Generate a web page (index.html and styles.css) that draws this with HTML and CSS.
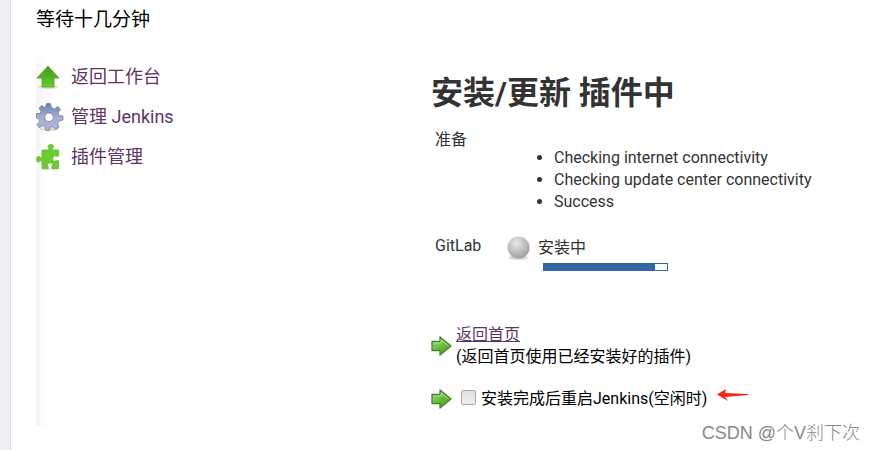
FILE: index.html
```html
<!DOCTYPE html>
<html lang="zh-CN">
<head>
    <meta charset="UTF-8">
    <meta name="viewport" content="width=device-width, initial-scale=1.0">
    <title>安装/更新 插件中</title>
    <link rel="stylesheet" href="styles.css">
</head>
<body>

    <div class="article">
        <p class="intro">等待十几分钟</p>

        <div class="jenkins">
            <!-- Side menu -->
            <nav class="side-panel">
                <a class="task" href="#">
                    <svg class="task-icon" viewBox="0 0 28 28">
                        <defs>
                            <linearGradient id="up" x1="0" y1="0" x2="0" y2="1">
                                <stop offset="0" stop-color="#4f9a2c"/>
                                <stop offset="0.5" stop-color="#4db025"/>
                                <stop offset="1" stop-color="#66d61c"/>
                            </linearGradient>
                        </defs>
                        <ellipse cx="12" cy="24" rx="10" ry="2" fill="#ddd"/>
                        <path d="M12 3 L23 15 H18 V24 H6 V15 H1 Z" fill="url(#up)" stroke="#57a036" stroke-width="0.8" stroke-linejoin="round"/>
                    </svg>
                    返回工作台
                </a>
                <a class="task" href="#">
                    <svg class="task-icon" viewBox="0 0 28 28">
                        <defs>
                            <linearGradient id="gear" x1="0" y1="0" x2="0" y2="1">
                                <stop offset="0" stop-color="#6580b0"/>
                                <stop offset="0.5" stop-color="#a3aed2"/>
                                <stop offset="1" stop-color="#b4b4d8"/>
                            </linearGradient>
                        </defs>
                        <ellipse cx="13" cy="26" rx="10" ry="2" fill="#ddd"/>
                        <path fill="url(#gear)" stroke="#7480a5" stroke-width="0.8" stroke-linejoin="round" fill-rule="evenodd" d="M10.500 0.500 H14.500 L15.500 4.500 L18.500 6 L22 3.500 L24.500 6.500 L22 10 L23 12.500 L27 13 V17 L23 18 L21.500 20.500 L23 24 L19.500 26.500 L16.500 23.500 L14.500 24 L13 27.500 H10 L9 23.500 L7 22.500 L3 24.500 L1 21.500 L3.500 18.500 L3 16 L0 14.500 V10.500 L4 10.500 L5 8.500 L3 5 L6 2.500 L9 5 Z M13 10 A4.300 4.300 0 1 0 13 18.600 A4.300 4.300 0 1 0 13 10 Z"/>
                    </svg>
                    管理 Jenkins
                </a>
                <a class="task" href="#">
                    <svg class="task-icon" viewBox="0 0 28 28">
                        <ellipse cx="14" cy="26" rx="10" ry="1" fill="#e2e2e2"/>
                        <path d="M6 7 H12.500 C14 5.500 11.500 4.500 12 3 C12.500 1 17 1 17.500 3 C18 4.500 15.500 5.500 17 7 H22.500 V13 C21 14.500 19.500 12 17.800 13 C16.300 14 16.300 17 17.800 18 C19.500 19 21 16.500 22.500 18 V25.500 H16 C14.800 24 17 23 16.500 21 C16 19.500 12 19.500 11.500 21 C11 23 13.200 24 12 25.500 H6 V18 C4.500 16.500 4 19.500 2 19 C0 18.500 0 14 2 13.500 C4 13 4.500 16 6 14.500 Z" fill="#6ccd2c" stroke="#64b834" stroke-width="0.8"/>
                    </svg>
                    插件管理
                </a>
            </nav>

            <!-- Install progress -->
            <main class="main-panel">
                <h1 class="title">安装/更新 插件中</h1>

                <table class="jobs">
                    <tr class="job-prepare">
                        <th scope="row">准备</th>
                        <td>
                            <ul class="checks">
                                <li>Checking internet connectivity</li>
                                <li>Checking update center connectivity</li>
                                <li>Success</li>
                            </ul>
                        </td>
                    </tr>
                    <tr>
                        <th scope="row">GitLab</th>
                        <td>
                            <div class="status">
                                <svg class="ball" viewBox="0 0 26 26">
                                    <defs>
                                        <radialGradient id="grey" cx="0.4" cy="0.3" r="0.7">
                                            <stop offset="0" stop-color="#e8e8e8"/>
                                            <stop offset="0.5" stop-color="#c4c4c4"/>
                                            <stop offset="1" stop-color="#a0a0a0"/>
                                        </radialGradient>
                                    </defs>
                                    <ellipse cx="13" cy="23" rx="10" ry="2.500" fill="#d8d8d8"/>
                                    <circle cx="13" cy="12.500" r="11.500" fill="url(#grey)"/>
                                </svg>
                                <span id="job-label">安装中</span>
                            </div>
                            <div class="bar" role="progressbar" aria-labelledby="job-label" aria-valuenow="90" aria-valuemin="0" aria-valuemax="100">
                                <div class="bar-done" style="width: 90%"></div>
                            </div>
                        </td>
                    </tr>
                </table>

                <svg class="defs" width="0" height="0">
                    <defs>
                        <linearGradient id="go" x1="0" y1="0" x2="1" y2="1">
                            <stop offset="0" stop-color="#a5d883"/>
                            <stop offset="0.6" stop-color="#5fb52f"/>
                            <stop offset="1" stop-color="#3f9a1c"/>
                        </linearGradient>
                        <symbol id="arrow" viewBox="0 0 21 20">
                            <path d="M1 5.500 H9 V1 L20 10 L9 19 V14.500 H1 Z" fill="url(#go)" stroke="#43852a" stroke-width="1.300" stroke-linejoin="round"/>
                            <path d="M2.500 7 H10.300 V4 L17.500 10" fill="none" stroke="#c3e6ac" stroke-width="0.800"/>
                        </symbol>
                    </defs>
                </svg>

                <div class="next-steps">
                    <div class="next">
                        <svg class="arrow"><use href="#arrow"/></svg>
                        <div>
                            <a class="home-link" href="#">返回首页</a><br>
                            (返回首页使用已经安装好的插件)
                        </div>
                    </div>
                    <div class="next">
                        <svg class="arrow"><use href="#arrow"/></svg>
                        <input class="restart-box" type="checkbox" id="restart">
                        <label for="restart">安装完成后重启Jenkins(空闲时)</label>
                        <svg class="pointer" viewBox="0 0 32 12">
                            <path d="M0 5.500 L9 0 L8 4 L31 5 V6 L8 8 L11 12 Z" fill="#fb2314"/>
                        </svg>
                    </div>
                </div>
            </main>
        </div>
    </div>

    <div class="watermark">CSDN @个V刹下次</div>

</body>
</html>
```
FILE: styles.css
```css
* { box-sizing: border-box; }

body {
    margin: 0;
    padding-left: 10px;
    background: #eeeef4;
    color: #333;
    font: 16px/22px Roboto, "Noto Sans CJK SC", sans-serif;
}

.article {
    min-height: 100vh;
    padding: 9px 0 24px 25px;
    background: white;
    border-left: 1px solid #dcdce2;
}

.intro {
    margin: 0 0 18px;
    color: #000;
    font-size: 19px;
}

.jenkins { display: flex; }

/* Side menu */
.side-panel {
    display: flex;
    flex-direction: column;
    flex: 0 0 395px;
    gap: 12px;
    min-height: 377px;
    padding-top: 14px;
    background: linear-gradient(white, transparent 24px), linear-gradient(to right, #f5f5f5, white 12px);
}
.task {
    display: flex;
    align-items: center;
    gap: 7px;
    color: #5c3566;
    font-size: 18px;
    line-height: 28px;
    text-decoration: none;
}
.task-icon { width: 28px; height: 28px; }

/* Main panel */
.main-panel { flex: 1; padding-top: 22px; }
.title {
    margin: 0 0 12px;
    font-size: 32px;
    line-height: 44px;
}

.jobs { border-collapse: collapse; }
.jobs th {
    width: 75px;
    padding: 2px 4px;
    font-weight: normal;
    text-align: left;
    vertical-align: top;
}
.jobs td { padding: 0; vertical-align: top; }
.job-prepare { height: 106px; }
.checks { margin: 0; padding: 20px 0 0 48px; }

.status { display: flex; align-items: center; gap: 7px; padding-top: 2px; }
.ball { width: 25px; height: 26px; }
.bar {
    width: 125px;
    height: 8px;
    margin: 2px 0 0 37px;
    border: 1px solid #3465a4;
}
.bar-done { height: 100%; background: #3465a4; }

/* Next steps */
.defs { display: block; }
.next-steps {
    display: flex;
    flex-direction: column;
    gap: 20px;
    margin-top: 53px;
}
.next {
    display: flex;
    align-items: center;
    color: #000;
}
.arrow { width: 21px; height: 20px; margin-right: 4px; }
.home-link { color: #5c3566; }
.restart-box {
    appearance: none;
    width: 15px;
    height: 15px;
    margin: 0 5px 4px;
    background: linear-gradient(#e0e0e0, #eee);
    border: 1px solid #aaa;
    border-radius: 2px;
}
.restart-box:checked { background: #3465a4; }
.pointer { width: 32px; height: 12px; margin: 0 0 8px 10px; }

.watermark {
    position: absolute;
    right: 16px;
    bottom: 6px;
    color: #888;
    font: 300 18px/22px "Liberation Sans", "Noto Sans CJK SC", sans-serif;
}
```
